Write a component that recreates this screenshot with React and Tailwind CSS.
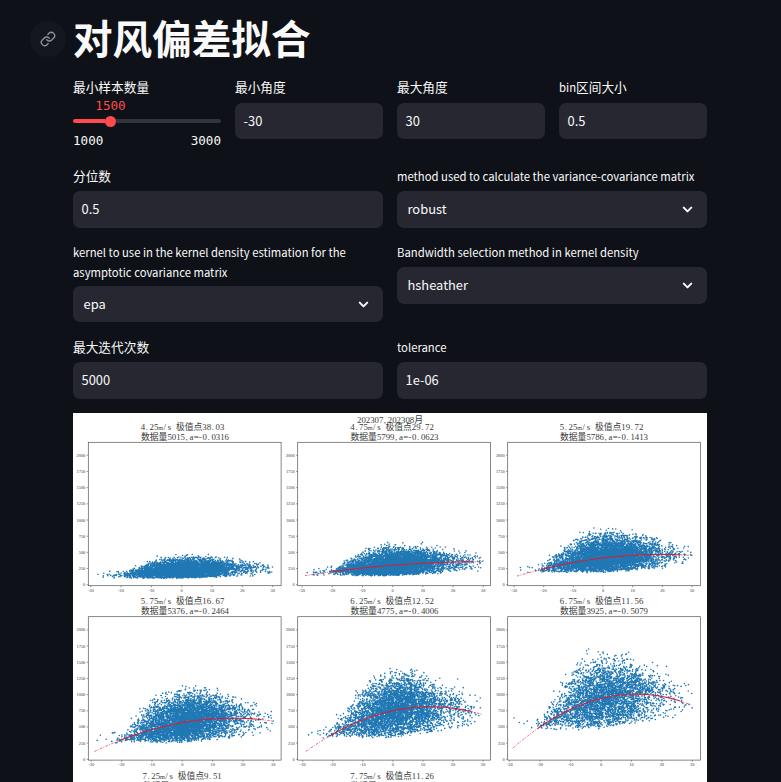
import React from "react";
import { ChevronDown, Link } from "lucide-react";

const UI = "font-['Noto_Sans_CJK_SC','Source_Sans_Pro',sans-serif]";

function Label({ children, cjk, short }) {
  return (
    <div
      className={`leading-5 text-[#fafafa] ${short ? "mb-1.5" : "mb-[5px] pt-px"} ${
        cjk ? "text-[12.7px]" : "text-[11.3px]"
      }`}
    >
      {children}
    </div>
  );
}

function Field({ label, value, cjk, children, short }) {
  return (
    <div className="flex flex-col">
      <Label cjk={cjk} short={short}>{children || label}</Label>
      <div
        className={`flex items-center rounded-[7px] bg-[#262730] px-[8.5px] text-[12.9px] text-[#fafafa] ${
          short ? "h-9" : "h-[37px] pb-px"
        }`}
      >
        {value}
      </div>
    </div>
  );
}

function SelectField({ label, value, tall }) {
  return (
    <div className="flex flex-col">
      <Label>{label}</Label>
      <div
        className={`flex items-center justify-between rounded-[7px] bg-[#262730] pl-[10.5px] pr-3 text-[12.9px] text-[#fafafa] ${
          tall ? "-mt-px h-9" : "h-[37px]"
        }`}
      >
        <span className={tall ? "" : "-mt-px"}>{value}</span>
        <ChevronDown size={15} strokeWidth={3.2} />
      </div>
    </div>
  );
}

function Slider() {
  return (
    <div className="flex flex-col">
      <div className="text-[12.7px] leading-5 text-[#fafafa]">最小样本数量</div>
      <div className="flex h-4 w-[75px] items-center justify-center pt-0.5 font-['DejaVu_Sans_Mono',monospace] text-[12.6px] leading-4 text-[#ff4b4b]">
        1500
      </div>
      <div className="flex h-4 items-center">
        <div className="h-1 w-8 rounded-l bg-[#ff4b4b]" />
        <div className="size-[11px] rounded-full bg-[#ff4b4b]" />
        <div className="h-1 flex-1 rounded-r bg-[#31333d]" />
      </div>
      <div className="mt-1 flex h-4 items-center justify-between font-['DejaVu_Sans_Mono',monospace] text-[12.6px] text-[#fafafa]">
        <span>1000</span>
        <span>3000</span>
      </div>
    </div>
  );
}

// Plot geometry is in figure pixels; the figure is 634 px wide.
const charts = [
  { fx: 15.3, fy: 29.3, zero: 171.7, x0: 17.7, x1: 199.7, tx: 68, t1: "4.25m/s 极值点38.03", t2: "数据量5015,a=-0.0316", n: 5015, a: -0.0316, v: 38.03, peak: 262, low: 100, top: 440, curve: false },
  { fx: 224.7, fy: 29.3, zero: 171.7, x0: 229, x1: 410.3, tx: 277.5, t1: "4.75m/s 极值点29.72", t2: "数据量5799,a=-0.0623", n: 5799, a: -0.0623, v: 29.72, peak: 355, low: 140, top: 610, curve: true },
  { fx: 434.7, fy: 29.3, zero: 171.7, x0: 441, x1: 619, tx: 487, t1: "5.25m/s 极值点19.72", t2: "数据量5786,a=-0.1413", n: 5786, a: -0.1413, v: 19.72, peak: 468, low: 195, top: 830, curve: true },
  { fx: 15.3, fy: 203.7, zero: 346.3, x0: 18.3, x1: 200.3, tx: 68, t1: "5.75m/s 极值点16.67", t2: "数据量5376,a=-0.2464", n: 5376, a: -0.2464, v: 16.67, peak: 635, low: 265, top: 1080, curve: true },
  { fx: 224.7, fy: 203.7, zero: 346.3, x0: 229.7, x1: 410, tx: 277.5, t1: "6.25m/s 极值点12.52", t2: "数据量4775,a=-0.4006", n: 4775, a: -0.4006, v: 12.52, peak: 812, low: 345, top: 1360, curve: true },
  { fx: 434.7, fy: 203.7, zero: 346.3, x0: 436.7, x1: 619.3, tx: 487, t1: "6.75m/s 极值点11.56", t2: "数据量3925,a=-0.5079", n: 3925, a: -0.5079, v: 11.56, peak: 1008, low: 475, top: 1610, curve: true },
];

const envelope = [[-30, 0.36], [-20, 0.43], [-15, 0.66], [-8, 0.93], [0, 1], [8, 1], [20, 0.88], [31, 0.75]];

function envelopeAt(x) {
  for (let i = 1; i < envelope.length; i++) {
    const [xa, ya] = envelope[i - 1];
    const [xb, yb] = envelope[i];
    if (x <= xb) return ya + ((yb - ya) * (x - xa)) / (xb - xa);
  }
  return 0.75;
}

function makeRandom(seed) {
  let s = seed;
  return () => {
    s = (s + 0x6d2b79f5) | 0;
    let t = Math.imul(s ^ (s >>> 15), 1 | s);
    t = (t + Math.imul(t ^ (t >>> 7), 61 | t)) ^ t;
    return ((t ^ (t >>> 14)) >>> 0) / 4294967296;
  };
}

function build(c, seed) {
  const rnd = makeRandom(seed * 977 + 5);
  const gauss = () => Math.sqrt(-2 * Math.log(1 - rnd())) * Math.cos(2 * Math.PI * rnd());
  const px = (x) => (c.x0 + ((x + 30) * (c.x1 - c.x0)) / 60).toFixed(2);
  const py = (y) => (c.zero - y * 0.0647).toFixed(2);
  const fit = (x) => c.peak + c.a * (x - c.v) ** 2;
  let dots = "";
  let made = 0;
  while (made < c.n) {
    const x = rnd() < 0.85 ? 0.8 + gauss() * 8.4 : 5 + gauss() * 13;
    if (x < -27 || x > 30 || (x < -19 && rnd() < 0.5)) continue;
    const m = fit(x);
    const top = Math.max(c.top * envelopeAt(x), m * 1.15);
    const low = c.low * (x > 0 ? 1 + x * 0.017 : 1);
    const z = gauss();
    const y = z > 0 ? m + (z * (top - m)) / 2.4 : m + z * Math.max(m - low, 25) * 0.62;
    if (y < low * (0.94 + rnd() * 0.14) || y > top * (0.95 + rnd() * 0.16)) continue;
    dots += `M${px(x)} ${py(y)}h0`;
    made++;
  }
  for (let x = -28.6; x < -20; x += 0.6 + rnd() * 1.6) {
    dots += `M${px(x + rnd())} ${py(Math.max(fit(x), c.low) * (1.02 + rnd() * 0.45))}h0`;
  }
  let solid = "";
  let sparse = "";
  if (c.curve) {
    for (let x = -21; x <= 26; x += 1) solid += `${solid ? "L" : "M"}${px(x)} ${py(fit(x))}`;
    sparse = `M${px(-29)} ${py(fit(-29))}Q${px(-25)} ${py(fit(-25) + 16 * c.a * -0.25)} ${px(-21)} ${py(fit(-21))}`;
    sparse += `M${px(26)} ${py(fit(26))}L${px(29.7)} ${py(fit(29.7))}`;
  }
  return { dots, solid, sparse };
}

const plots = charts.map((c, i) => ({ ...c, ...build(c, i + 1) }));

const insets = { s: 0.6, "/": 0.8, ".": 0.6, ",": 0.4, "-": 0.5, a: 0.2 };

// Half-width glyphs take one cell and Chinese glyphs take two.
function GridText({ x, y, text, size = 8.8 }) {
  const cell = size / 2;
  let at = x;
  const xs = [];
  for (const ch of text) {
    xs.push((at + (insets[ch] || 0)).toFixed(1));
    at += ch > "\u2fff" ? cell * 2 : cell;
  }
  const [head, tail] = text.split("m/");
  return (
    <text x={xs.join(" ")} y={y} fontSize={size} fill="#3a3a3a" className="font-['Liberation_Serif','Noto_Sans_CJK_SC',serif]">
      {head}
      {tail !== undefined && <tspan fontSize="6.2">m</tspan>}
      {tail !== undefined && `/${tail}`}
    </text>
  );
}

function Plot({ p }) {
  const bottom = p.fy + 143.4;
  return (
    <g>
      <path d={p.dots} stroke="#1f77b4" strokeWidth="1.6" strokeLinecap="round" />
      <path d={p.solid} fill="none" stroke="#cf2238" strokeWidth="1.1" />
      <path d={p.sparse} fill="none" stroke="#e8384a" strokeWidth="0.8" strokeDasharray="2.4 1.2 1 1.6" />
      <rect x={p.fx} y={p.fy} width="192.8" height="143.4" fill="none" stroke="#555" strokeWidth="0.7" />
      {[0, 250, 500, 750, 1000, 1250, 1500, 1750, 2000].map((v) => {
        const y = p.zero - v * 0.0647;
        return (
          <g key={v}>
            <path d={`M${p.fx - 1.6} ${y}H${p.fx}`} stroke="#555" strokeWidth="0.6" />
            <text x={p.fx - 3} y={y + 1.5} textAnchor="end" fontSize="4.4" fill="#333" className="font-['Liberation_Serif',serif]">
              {v}
            </text>
          </g>
        );
      })}
      {[-30, -20, -10, 0, 10, 20, 30].map((v) => {
        const x = p.x0 + ((v + 30) * (p.x1 - p.x0)) / 60;
        return (
          <g key={v}>
            <path d={`M${x} ${bottom}v1.6`} stroke="#555" strokeWidth="0.6" />
            <text x={x} y={bottom + 6.2} textAnchor="middle" fontSize="4.4" fill="#333" className="font-['Liberation_Serif',serif]">
              {v}
            </text>
          </g>
        );
      })}
      <GridText x={p.tx - 0.3} y={p.fy - 12.6} text={p.t1} />
      <GridText x={p.tx} y={p.fy - 2.8} text={p.t2} />
    </g>
  );
}

export default function App() {
  return (
    <div className={`h-[782px] w-full overflow-hidden bg-[#0e1117] ${UI}`}>
      <div className="flex h-[77px] items-start pl-[30px] pt-[9px]">
        <div className="mt-3 flex size-9 items-center justify-center rounded-full bg-[#14171e] text-[#92949a]">
          <Link size={16} strokeWidth={2} />
        </div>
        <h1 className="ml-[7px] text-[39.6px] font-bold leading-[56px] text-[#fafafa]">对风偏差拟合</h1>
      </div>
      <main className="ml-[73px] flex w-[634px] flex-col">
        <div className="grid h-[88px] grid-cols-4 items-start gap-[14px]">
          <Slider />
          <Field label="最小角度" value="-30" cjk short />
          <Field label="最大角度" value="30" cjk short />
          <Field value="0.5" cjk short>
            <span className="text-[11.35px]">bin</span>区间大小
          </Field>
        </div>
        <div className="grid h-[76px] grid-cols-2 items-start gap-[14px]">
          <Field label="分位数" value="0.5" cjk />
          <SelectField label="method used to calculate the variance-covariance matrix" value="robust" />
        </div>
        <div className="grid h-[95px] grid-cols-2 items-start gap-[14px]">
          <SelectField label="kernel to use in the kernel density estimation for the asymptotic covariance matrix" value="epa" tall />
          <SelectField label="Bandwidth selection method in kernel density" value="hsheather" />
        </div>
        <div className="grid h-[77px] grid-cols-2 items-start gap-[14px]">
          <Field label="最大迭代次数" value="5000" cjk />
          <Field label="tolerance" value="1e-06" />
        </div>
        <svg width="634" height="369" viewBox="0 0 634 369" className="block bg-white">
          {plots.map((p) => (
            <Plot key={p.t1} p={p} />
          ))}
          <GridText x={284} y={10.2} text="202307,202308月" />
          <GridText x={69.5} y={366} text="7.25m/s 极值点9.51" />
          <GridText x={277.2} y={366} text="7.75m/s 极值点11.26" />
          <GridText x={70} y={376} text="数据量" />
          <GridText x={277.5} y={376} text="数据量" />
        </svg>
      </main>
    </div>
  );
}
